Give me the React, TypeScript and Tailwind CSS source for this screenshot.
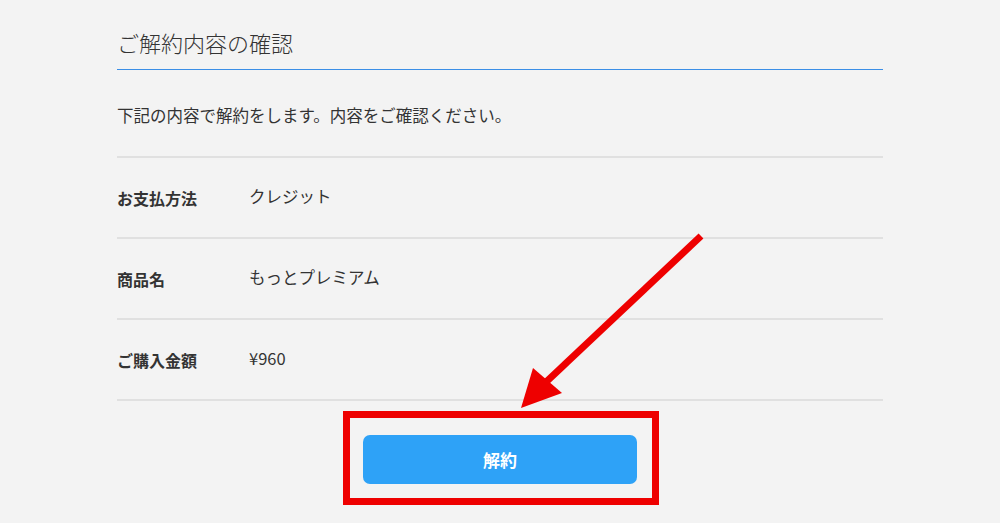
import React from 'react';

const rows = [
  { label: 'お支払方法', value: 'クレジット' },
  { label: '商品名', value: 'もっとプレミアム' },
  { label: 'ご購入金額', value: '¥960' },
];

export default function App() {
  return (
    <div
      className="relative h-[523px] w-[1000px] overflow-hidden bg-[#f3f3f3] text-[#333]"
      style={{ fontFamily: '"Noto Sans CJK JP", "Noto Sans", sans-serif' }}
    >
      <div className="ml-[117px] w-[766px] pt-[27px]">
        {/* heading */}
        <h1 className="border-b border-[#3a8ee6] pb-[11px] text-[22px] font-light leading-[31px] text-[#333]">
          ご解約内容の確認
        </h1>

        <p className="border-b-2 border-[#e0e0e0] pt-[34px] pb-[29px] text-[16.5px] leading-[23px]">
          下記の内容で解約をします。内容をご確認ください。
        </p>

        {rows.map((r) => (
          <div key={r.label} className="flex h-[81px] items-center border-b-2 border-[#e0e0e0] pb-[2px]">
            <div className="w-[132px] pt-[3px] text-[16px] font-bold">{r.label}</div>
            <div className="text-[16.5px]">{r.value}</div>
          </div>
        ))}

        <div className="flex justify-center pt-[34px]">
          <button className="h-[49px] w-[274px] rounded-[7px] bg-[#2ea2f7] text-[17px] font-bold text-white">
            解約
          </button>
        </div>
      </div>

      {/* annotation: red frame */}
      <div className="absolute left-[343px] top-[411px] h-[94px] w-[316px] border-[7px] border-[#ee0000]" />

      {/* annotation: arrow */}
      <svg className="absolute left-0 top-0" width="1000" height="523" viewBox="0 0 1000 523">
        <line x1="701" y1="236" x2="545" y2="383" stroke="#ee0000" strokeWidth="7" />
        <polygon points="521,408 533,368 562,393" fill="#ee0000" />
      </svg>
    </div>
  );
}
